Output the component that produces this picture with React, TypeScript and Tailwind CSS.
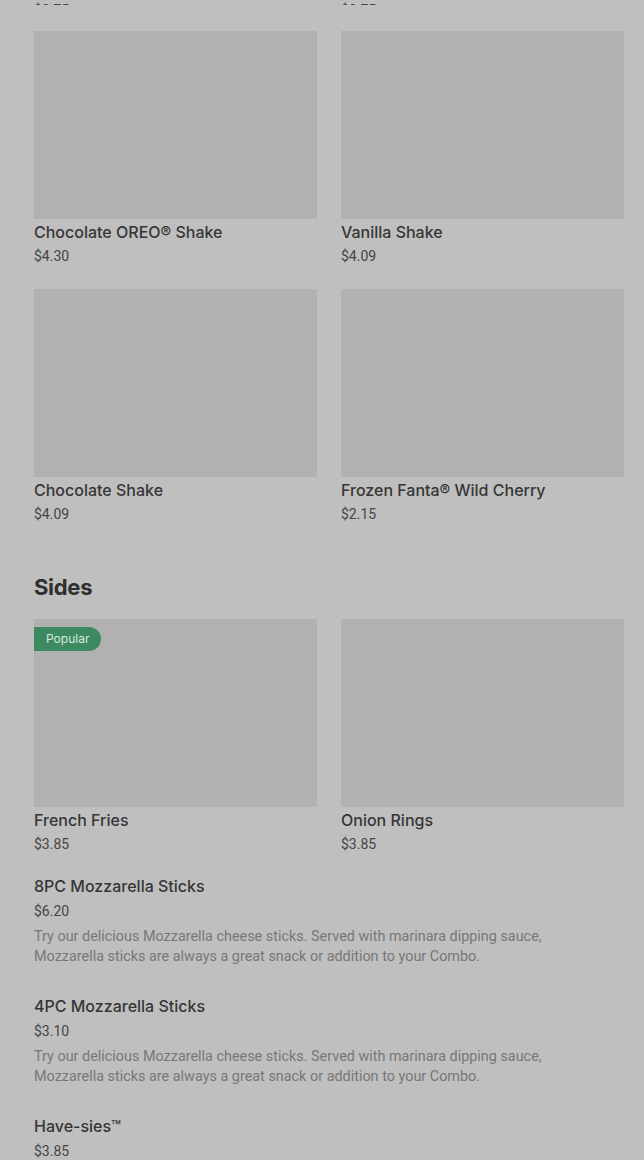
import React from "react";

type Item = { name: string; price: string; popular?: boolean };

const shakes: Item[][] = [
  [
    { name: "Chocolate OREO® Shake", price: "$4.30" },
    { name: "Vanilla Shake", price: "$4.09" },
  ],
  [
    { name: "Chocolate Shake", price: "$4.09" },
    { name: "Frozen Fanta® Wild Cherry", price: "$2.15" },
  ],
];

const sides: Item[] = [
  { name: "French Fries", price: "$3.85", popular: true },
  { name: "Onion Rings", price: "$3.85" },
];

const listItems = [
  {
    name: "8PC Mozzarella Sticks",
    price: "$6.20",
    desc: "Try our delicious Mozzarella cheese sticks. Served with marinara dipping sauce, Mozzarella sticks are always a great snack or addition to your Combo.",
  },
  {
    name: "4PC Mozzarella Sticks",
    price: "$3.10",
    desc: "Try our delicious Mozzarella cheese sticks. Served with marinara dipping sauce, Mozzarella sticks are always a great snack or addition to your Combo.",
  },
  { name: "Have-sies™", price: "$3.85" },
];

const body = { fontFamily: "Roboto, 'Liberation Sans', sans-serif" };

function Price({ value, className = "" }: { value: string; className?: string }) {
  return (
    <p className={`text-[14px] leading-5 text-[#454545] ${className}`} style={body}>
      {value}
    </p>
  );
}

function Card({ item }: { item: Item }) {
  return (
    <div className="flex flex-col">
      <div className="relative h-[188px] bg-[#b1b1b1]">
        {item.popular && (
          <span className="absolute left-0 top-2 flex h-6 items-center rounded-r-full bg-[#3d8a61] pl-3 pr-3 text-[12px] text-[#d9e8df]">
            Popular
          </span>
        )}
      </div>
      <p className="mt-px text-[16px] leading-6 font-medium text-[#363636]">
        {item.name}
      </p>
      <Price value={item.price} className="mt-[2px]" />
    </div>
  );
}

export default function App() {
  return (
    <div
      className="h-[1160px] overflow-hidden bg-[#bfbfbf] pl-[34px] pr-[20px]"
      style={{ fontFamily: "Inter, 'Noto Sans', sans-serif" }}
    >
      {/* tail of the row above, scrolled mostly out of view */}
      <div className="grid h-[5px] grid-cols-2 gap-x-6 overflow-hidden">
        <div className="flex items-end">
          <Price value="$2.75" className="-mb-[1px]" />
        </div>
        <div className="flex items-end">
          <Price value="$2.75" className="-mb-[1px]" />
        </div>
      </div>

      <div className="mt-[26px] flex flex-col gap-[23px]">
        {shakes.map((row, i) => (
          <div key={i} className="grid grid-cols-2 gap-x-6">
            {row.map((it) => (
              <Card key={it.name} item={it} />
            ))}
          </div>
        ))}
      </div>

      <h2 className="mt-[47px] text-[22px] leading-8 font-bold tracking-[-0.3px] text-[#2f2f2f]">
        Sides
      </h2>

      <div className="mt-4 grid grid-cols-2 gap-x-6">
        {sides.map((it) => (
          <Card key={it.name} item={it} />
        ))}
      </div>

      <div className="mt-[20px] flex flex-col gap-[27px]">
        {listItems.map((it) => (
          <div key={it.name} className="flex flex-col">
            <p className="text-[16px] leading-6 font-medium text-[#363636]">
              {it.name}
            </p>
            <Price value={it.price} className="mt-[3px]" />
            {it.desc && (
              <p
                className="mt-[6px] max-w-[530px] text-[14.4px] leading-5 text-[#777777]"
                style={body}
              >
                {it.desc}
              </p>
            )}
          </div>
        ))}
      </div>
    </div>
  );
}
